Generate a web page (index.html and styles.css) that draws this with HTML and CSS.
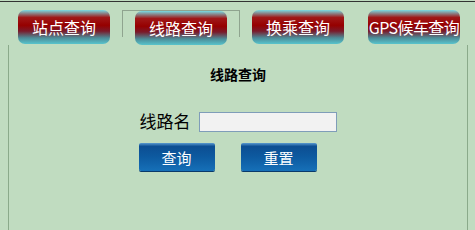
FILE: index.html
```html
<!DOCTYPE html>
<html lang="zh-CN">
<head>
    <meta charset="UTF-8">
    <title>线路查询</title>
    <link rel="stylesheet" href="styles.css">
</head>
<body>
    <div id="page">
        <div class="tabs">
            <div class="tab-cell"><div class="tab-btn">站点查询</div></div>
            <div class="tab-cell active"><div class="tab-btn">线路查询</div></div>
            <div class="tab-cell"><div class="tab-btn">换乘查询</div></div>
            <div class="tab-cell"><div class="tab-btn tab-btn-long">GPS候车查询</div></div>
        </div>

        <div class="panel">
            <h3 class="panel-title">线路查询</h3>
            <div class="search-form">
                <div class="form-row">
                    <label for="lineName" class="form-label">线路名</label>
                    <input type="text" id="lineName" class="form-input">
                </div>
                <div class="form-buttons">
                    <button class="blue-btn">查询</button>
                    <button class="blue-btn">重置</button>
                </div>
            </div>
        </div>
    </div>
</body>
</html>
```

FILE: styles.css
```css
body {
    font-family: "Noto Sans CJK SC", "Liberation Sans", sans-serif;
    margin: 0;
    padding: 1px 0 0 0;
    background-color: #c0dcc0;
    overflow: hidden;
}

#page {
    border-top: 1px solid #333;
}

.tabs {
    display: flex;
    height: 35px;
    padding: 8px 0 0 6px;
}

.tab-cell {
    width: 116px;
    height: 27px;
    display: flex;
    justify-content: center;
    align-items: flex-start;
    box-sizing: border-box;
}

.tab-cell.active {
    width: 118px;
    border: 1px solid #8fa48f;
    border-bottom: none;
}

.tab-btn {
    flex-shrink: 0;
    width: 92px;
    height: 34px;
    line-height: 34px;
    text-align: center;
    font-size: 16px;
    color: #fff;
    white-space: nowrap;
    border-radius: 7px;
    background: linear-gradient(to bottom, #78dce4 0%, #a01818 22%, #960000 45%, #7a1a2a 62%, #4c8c98 82%, #58c4cc 100%);
    cursor: pointer;
}

.tab-btn-long {
    letter-spacing: -0.6px;
}

.panel {
    margin: 0 7px 0 8px;
    height: 185px;
    border-left: 1px solid #8aaa8a;
    border-right: 1px solid #8aaa8a;
    padding-top: 20px;
    box-sizing: border-box;
}

.panel-title {
    margin: 0;
    font-size: 14px;
    line-height: 18px;
    font-weight: bold;
    text-align: center;
    color: #000;
}

.search-form {
    width: 197px;
    margin: 29px auto 0 auto;
}

.form-row {
    display: flex;
    align-items: center;
    justify-content: space-between;
}

.form-label {
    font-size: 17px;
    line-height: 20px;
    margin-top: -3px;
    color: #000;
}

.form-input {
    width: 138px;
    height: 20px;
    margin: 0;
    padding: 0 3px;
    box-sizing: border-box;
    border: 1px solid #7f9db9;
    background-color: #f2f2f2;
}

.form-buttons {
    display: flex;
    gap: 26px;
    margin: 11px 0 0 -1px;
}

.blue-btn {
    width: 76px;
    height: 28px;
    padding: 0;
    margin: 0;
    border: none;
    border-radius: 2px;
    font-family: "Noto Sans CJK SC", sans-serif;
    font-size: 15px;
    color: #fff;
    background: linear-gradient(to bottom, #5a9ad0 0%, #0c4e92 12%, #0d5aa0 50%, #1670b8 100%);
    box-shadow: 0 1px 0 #0a3a6a;
    cursor: pointer;
}
```
